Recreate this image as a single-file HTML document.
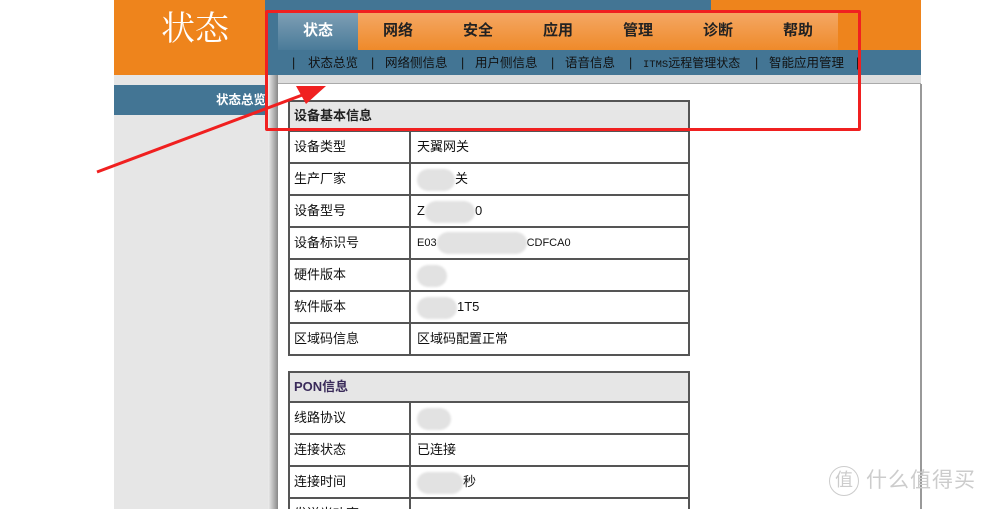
<!DOCTYPE html>
<html><head><meta charset="utf-8"><style>
*{margin:0;padding:0;box-sizing:border-box}
html,body{width:995px;height:509px;overflow:hidden}
body{background:#fff;position:relative;font-family:"Liberation Sans","Noto Sans CJK SC","WenQuanYi Zen Hei",sans-serif;font-size:13px;color:#000}
.a{position:absolute}
.tab{position:absolute;top:12px;height:38px;line-height:38px;text-align:center;font-weight:bold;font-size:15px;color:#222}
.s{position:absolute;top:50px;height:25px;line-height:26px;font-size:12.5px;color:#111;white-space:nowrap}
table{position:absolute;left:288px;width:402px;border-collapse:collapse}
td{border:2px solid #555;height:32px;padding:0 0 0 4px;font-size:13px;color:#111;line-height:28px}
td.h{background:#e6e6e6;font-weight:bold;font-size:13px;color:#222;height:30px}
td.k{width:121px}
td.v{padding-left:6px}
.blur{display:inline-block;background:#e2e2e2;border-radius:12px;height:22px;vertical-align:middle;filter:blur(1px)}
</style></head><body>
<div class="a" style="left:114px;top:0;width:151px;height:75px;background:#ee841c"></div>
<div class="a" style="left:114px;top:2px;width:162px;text-align:center;color:#fff;font-size:34px;line-height:48px;font-family:'Noto Serif CJK SC',serif">状态</div>
<div class="a" style="left:265px;top:0;width:446px;height:50px;background:#437594"></div>
<div class="a" style="left:711px;top:0;width:210px;height:50px;background:#ee841c"></div>
<div class="a" style="left:278px;top:12px;width:560px;height:38px;background:linear-gradient(#f4a865,#ef8a2a)"></div>
<div class="a" style="left:278px;top:12px;width:80px;height:38px;background:linear-gradient(#7f9fb5,#4a7b99)"></div>
<div class="tab" style="left:278px;width:80px;color:#fff">状态</div>
<div class="tab" style="left:358px;width:80px">网络</div>
<div class="tab" style="left:438px;width:80px">安全</div>
<div class="tab" style="left:518px;width:80px">应用</div>
<div class="tab" style="left:598px;width:80px">管理</div>
<div class="tab" style="left:678px;width:80px">诊断</div>
<div class="tab" style="left:758px;width:80px">帮助</div>
<div class="a" style="left:265px;top:50px;width:656px;height:25px;background:#437594"></div>
<div class="s" style="left:292px">|</div><div class="s" style="left:308px">状态总览</div>
<div class="s" style="left:371px">|</div><div class="s" style="left:385px">网络侧信息</div>
<div class="s" style="left:461px">|</div><div class="s" style="left:475px">用户侧信息</div>
<div class="s" style="left:551px">|</div><div class="s" style="left:565px">语音信息</div>
<div class="s" style="left:629px">|</div><div class="s" style="left:643px;font-size:12px"><span style="font-family:'Liberation Mono',monospace;font-size:10.5px">ITMS</span>远程管理状态</div>
<div class="s" style="left:755px">|</div><div class="s" style="left:769px">智能应用管理</div>
<div class="s" style="left:856px">|</div>
<div class="a" style="left:114px;top:75px;width:154px;height:434px;background:#e6e6e6"></div>
<div class="a" style="left:114px;top:85px;width:154px;height:30px;background:#437594;color:#fff;font-weight:bold;font-size:12.5px;line-height:30px;text-align:right;padding-right:2px">状态总览</div>
<div class="a" style="left:268px;top:75px;width:10px;height:434px;background:linear-gradient(90deg,#eee,#bbb,#888)"></div>
<div class="a" style="left:278px;top:75px;width:643px;height:9px;background:#ddd;border-bottom:1px solid #aaa"></div>
<div class="a" style="left:920px;top:84px;width:2px;height:425px;background:#999"></div>
<table style="top:100px">
<tr><td class="h" colspan="2">设备基本信息</td></tr>
<tr><td class="k">设备类型</td><td class="v">天翼网关</td></tr>
<tr><td class="k">生产厂家</td><td class="v"><span class="blur" style="width:38px"></span>关</td></tr>
<tr><td class="k">设备型号</td><td class="v">Z<span class="blur" style="width:50px"></span>0</td></tr>
<tr><td class="k">设备标识号</td><td class="v" style="font-size:11px">E03<span class="blur" style="width:90px"></span>CDFCA0</td></tr>
<tr><td class="k">硬件版本</td><td class="v"><span class="blur" style="width:30px"></span></td></tr>
<tr><td class="k">软件版本</td><td class="v"><span class="blur" style="width:40px"></span>1T5</td></tr>
<tr><td class="k">区域码信息</td><td class="v">区域码配置正常</td></tr>
</table>
<table style="top:371px">
<tr><td class="h" colspan="2" style="color:#3a2b5a">PON信息</td></tr>
<tr><td class="k">线路协议</td><td class="v"><span class="blur" style="width:34px"></span></td></tr>
<tr><td class="k">连接状态</td><td class="v">已连接</td></tr>
<tr><td class="k">连接时间</td><td class="v"><span class="blur" style="width:46px"></span>秒</td></tr>
<tr><td class="k">发送光功率</td><td class="v"></td></tr>
</table>
<div class="a" style="left:265px;top:10px;width:596px;height:121px;border:3px solid #f02020;border-radius:2px"></div>
<svg class="a" style="left:0;top:0" width="995" height="509">
<line x1="97" y1="172" x2="305" y2="94" stroke="#f02020" stroke-width="3"/>
<polygon points="326,86 296,86 306,104" fill="#f02020"/>
</svg>
<div class="a" style="left:829px;top:466px;width:30px;height:30px;border:1.5px solid #ccc;border-radius:50%;color:#ccc;font-size:18px;line-height:27px;text-align:center">值</div>
<div class="a" style="left:866px;top:466px;color:#ccc;font-size:21px;line-height:30px;letter-spacing:1px">什么值得买</div>
</body></html>
